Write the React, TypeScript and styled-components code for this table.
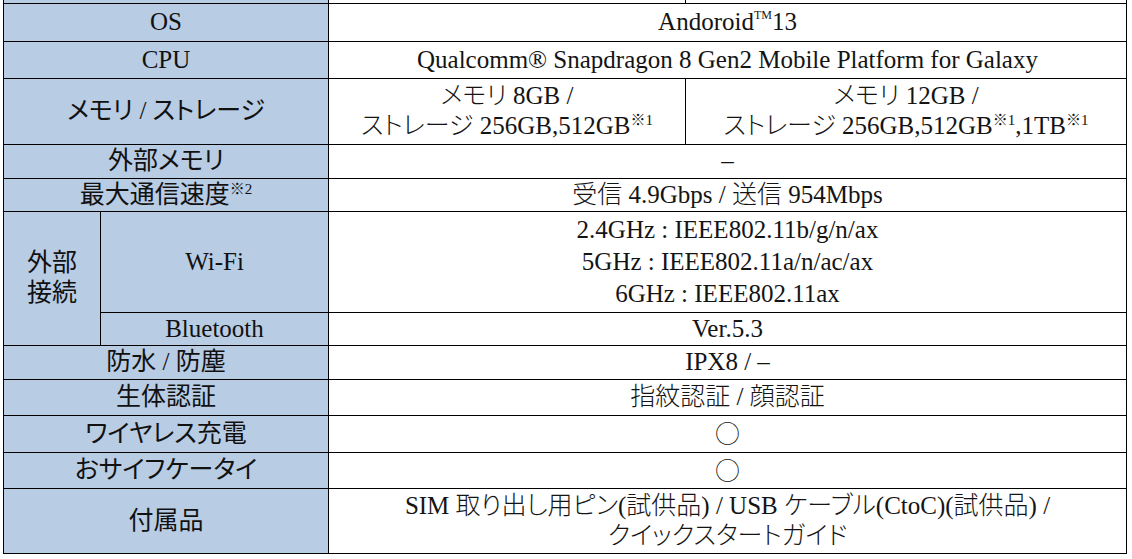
import React from 'react';
import styled, { createGlobalStyle } from 'styled-components';

const Global = createGlobalStyle`
  html, body { margin: 0; padding: 0; background: #fff; }
  body { font-family: "Liberation Serif", "Noto Sans CJK JP", serif; }
`;

const Page = styled.div`
  width: 1132px;
  height: 559px;
  overflow: hidden;
  padding-left: 3px;
  box-sizing: border-box;
`;

const Table = styled.table`
  border-collapse: collapse;
  table-layout: fixed;
  width: 1123px;
  color: #141414;
  font-family: "Liberation Serif", "Noto Sans CJK JP", serif;
  font-size: 25px;
  font-feature-settings: "palt";
`;

const Row = styled.tr<{ $h: number }>`
  height: ${(p) => p.$h}px;
`;

const Label = styled.th<{ $edge?: boolean }>`
  background: #b8cce4;
  border: 1px solid #000;
  font-weight: 400;
  text-align: center;
  vertical-align: middle;
  padding: 0;
  line-height: 30px;
  color: #111;
  ${(p) => (p.$edge ? 'border-top: none; line-height: 0;' : '')}
`;

const Cell = styled.td<{ $edge?: boolean; $lh?: number }>`
  border: 1px solid #000;
  text-align: center;
  vertical-align: middle;
  padding: 0;
  line-height: ${(p) => p.$lh ?? 30}px;
  font-weight: 300;
  ${(p) => (p.$edge ? 'border-top: none; line-height: 0;' : '')}
`;

const Sup = styled.sup<{ $size?: number }>`
  font-size: ${(p) => p.$size ?? 15}px;
  line-height: 0;
  vertical-align: ${(p) => (p.$size && p.$size < 14 ? '11px' : '9px')};
  font-family: "Liberation Serif", "Noto Sans CJK JP", serif;
`;

const Dash = styled.span`
  font-family: "Liberation Serif", serif;
`;

const Circle = styled.span`
  font-family: "Noto Sans CJK JP", sans-serif;
  font-weight: 300;
`;

export default function App() {
  return (
    <>
      <Global />
      <Page>
        <Table>
          <colgroup>
            <col style={{ width: 97 }} />
            <col style={{ width: 228 }} />
            <col style={{ width: 357 }} />
            <col style={{ width: 441 }} />
          </colgroup>
          <tbody>
            <Row $h={3}>
              <Label $edge colSpan={2} />
              <Cell $edge />
              <Cell $edge />
            </Row>
            <Row $h={38}>
              <Label colSpan={2}>OS</Label>
              <Cell colSpan={2}>
                Andoroid<Sup $size={12}>TM</Sup>13
              </Cell>
            </Row>
            <Row $h={37}>
              <Label colSpan={2}>CPU</Label>
              <Cell colSpan={2}>Qualcomm® Snapdragon 8 Gen2 Mobile Platform for Galaxy</Cell>
            </Row>
            <Row $h={66}>
              <Label colSpan={2}>メモリ / ストレージ</Label>
              <Cell>
                メモリ 8GB /<br />
                ストレージ 256GB,512GB<Sup>※1</Sup>
              </Cell>
              <Cell>
                メモリ 12GB /<br />
                ストレージ 256GB,512GB<Sup>※1</Sup>,1TB<Sup>※1</Sup>
              </Cell>
            </Row>
            <Row $h={34}>
              <Label colSpan={2}>外部メモリ</Label>
              <Cell colSpan={2}>
                <Dash>–</Dash>
              </Cell>
            </Row>
            <Row $h={33}>
              <Label colSpan={2}>
                最大通信速度<Sup>※2</Sup>
              </Label>
              <Cell colSpan={2}>受信 4.9Gbps / 送信 954Mbps</Cell>
            </Row>
            <Row $h={101}>
              <Label rowSpan={2}>
                外部
                <br />
                接続
              </Label>
              <Label>Wi-Fi</Label>
              <Cell colSpan={2} $lh={32}>
                2.4GHz : IEEE802.11b/g/n/ax
                <br />
                5GHz : IEEE802.11a/n/ac/ax
                <br />
                6GHz : IEEE802.11ax
              </Cell>
            </Row>
            <Row $h={33}>
              <Label>Bluetooth</Label>
              <Cell colSpan={2}>Ver.5.3</Cell>
            </Row>
            <Row $h={34}>
              <Label colSpan={2}>防水 / 防塵</Label>
              <Cell colSpan={2}>
                IPX8 / <Dash>–</Dash>
              </Cell>
            </Row>
            <Row $h={36}>
              <Label colSpan={2}>生体認証</Label>
              <Cell colSpan={2}>指紋認証 / 顔認証</Cell>
            </Row>
            <Row $h={37}>
              <Label colSpan={2}>ワイヤレス充電</Label>
              <Cell colSpan={2}>
                <Circle>○</Circle>
              </Cell>
            </Row>
            <Row $h={36}>
              <Label colSpan={2}>おサイフケータイ</Label>
              <Cell colSpan={2}>
                <Circle>○</Circle>
              </Cell>
            </Row>
            <Row $h={65}>
              <Label colSpan={2}>付属品</Label>
              <Cell colSpan={2}>
                SIM 取り出し用ピン(試供品) / USB ケーブル(CtoC)(試供品) /
                <br />
                クイックスタートガイド
              </Cell>
            </Row>
          </tbody>
        </Table>
      </Page>
    </>
  );
}
